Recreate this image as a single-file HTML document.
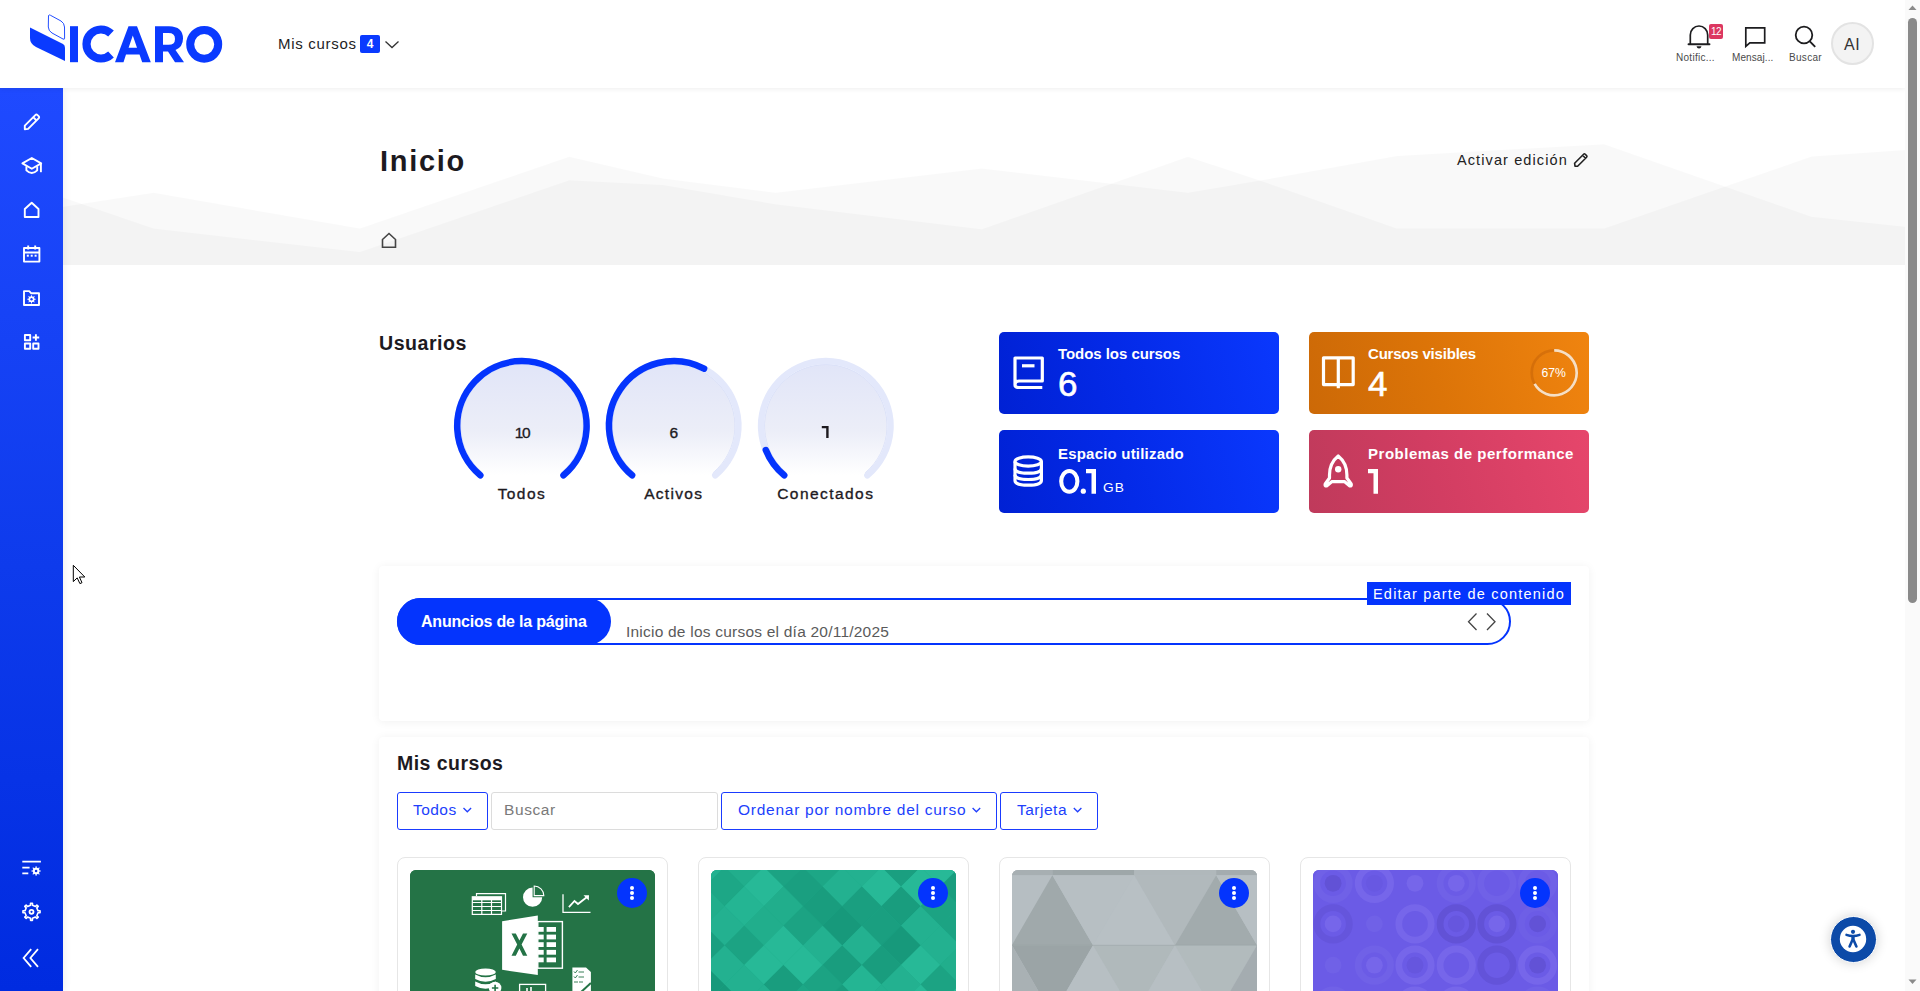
<!DOCTYPE html>
<html lang="es">
<head>
<meta charset="utf-8">
<title>Inicio</title>
<style>
*{box-sizing:border-box;margin:0;padding:0}
html,body{width:1920px;height:991px;overflow:hidden;background:#fff;font-family:"Liberation Sans",sans-serif;color:#1d1d1f}
.abs{position:absolute}
.t{position:absolute;white-space:nowrap;line-height:1}
#header{position:absolute;left:0;top:0;width:1905px;height:88px;background:#fff;box-shadow:0 1px 5px rgba(0,0,0,.07);z-index:5}
#sidebar{position:absolute;left:0;top:88px;width:63px;height:903px;background:linear-gradient(180deg,#1f4aff 0%,#0e3bec 53%,#002be0 100%);z-index:4;box-shadow:1px 0 8px rgba(0,0,0,.07)}
#sidebar svg{position:absolute;overflow:visible}
#scroll{position:absolute;left:1905px;top:0;width:15px;height:991px;background:#fafafa;z-index:10}
#pagehead{position:absolute;left:63px;top:88px;width:1842px;height:177px;background:#fff;overflow:hidden}

.btn{border:1.3px solid #1a3bff;border-radius:3px}
.card{width:271px;height:200px;border:1px solid #e6e6e6;border-radius:8px;background:#fff}
.cimg{width:245px;height:130px;border-radius:6px 6px 0 0;overflow:hidden}
.dots{width:30px;height:30px;border-radius:50%;background:#0434fd;z-index:2}
.dots i{position:absolute;left:13px;width:4.2px;height:4.2px;border-radius:50%;background:#fff}
.dots i:nth-child(1){top:7.9px}.dots i:nth-child(2){top:12.9px}.dots i:nth-child(3){top:17.9px}
#main{position:absolute;left:0;top:0;width:1905px;height:991px}
</style>
</head>
<body>

<div id="pagehead">
  <svg width="1842" height="177" viewBox="0 0 1842 177" style="position:absolute;left:0;top:0">
    <polygon fill="rgba(0,0,0,0.0235)" points="-2.0,118.8 0.0,118.8 90.6,104.7 296.9,140.6 506.2,68.8 600.0,90.6 712.5,104.7 918.8,80.6 1125.0,104.7 1200.0,92.0 1333.8,67.9 1541.1,56.2 1748.5,128.8 1842.0,138.8 1844.0,138.8 1844.0,180.0 -2.0,180.0"/>
    <polygon fill="rgba(0,0,0,0.0235)" points="-2.0,109.4 0.0,109.4 90.6,140.6 296.9,164.0 506.2,92.2 600.0,96.9 712.5,116.2 918.8,141.2 1125.0,68.8 1200.0,93.6 1333.8,140.5 1541.1,140.5 1748.5,68.6 1842.0,61.9 1844.0,61.9 1844.0,180.0 -2.0,180.0"/>
  </svg>
</div>


<div id="main">
  <div class="t" style="left:380px;top:147px;font-size:29px;font-weight:bold;color:#1d1a1f;letter-spacing:1.7px">Inicio</div>
  <div class="t" style="left:1457px;top:153px;font-size:14.5px;color:#222;letter-spacing:1.1px">Activar edición</div>
  <svg class="abs" style="left:1572px;top:152px" width="18" height="16" viewBox="0 0 18 16">
    <path d="M3 14.2 L2.6 11.2 L11.6 2.2 Q12.4 1.4 13.2 2.2 L14.6 3.6 Q15.4 4.4 14.6 5.2 L5.6 14.2 Z M10.6 3.3 L13.5 6.2" fill="none" stroke="#222" stroke-width="1.6" stroke-linejoin="round"/>
  </svg>
  <svg class="abs" style="left:378px;top:228px" width="22" height="22" viewBox="0 0 22 22">
    <path d="M4.5 19.3 L4.5 11.5 L11 5.5 L17.5 11.5 L17.5 19.3 Z" fill="none" stroke="#444" stroke-width="1.6" stroke-linejoin="miter"/>
  </svg>

  <!-- Usuarios -->
  <div class="t" style="left:379px;top:334.3px;font-size:19.6px;font-weight:bold;color:#1d1a1f;letter-spacing:0.5px">Usuarios</div>
  <svg class="abs" style="left:440px;top:340px" width="480" height="180" viewBox="0 0 480 180">
    <defs>
      <linearGradient id="gfill" x1="0" y1="0" x2="0" y2="1">
        <stop offset="0" stop-color="#e1e5f8"/>
        <stop offset="0.55" stop-color="#eceef8"/>
        <stop offset="0.9" stop-color="#ffffff"/>
      </linearGradient>
    </defs>
    <circle cx="81.90" cy="85.80" r="61.5" fill="url(#gfill)"/>
    <path d="M42.50 132.76 A61.3 61.3 0 1 1 121.30 132.76" fill="none" stroke="#d6ddf8" stroke-width="0.8"/>
    <path d="M40.31 135.36 A64.7 64.7 0 1 1 123.49 135.36" fill="none" stroke="#e3e8fb" stroke-width="6.5" stroke-linecap="round"/>
    <path d="M40.31 135.36 A64.7 64.7 0 1 1 123.49 135.36" fill="none" stroke="#0434fd" stroke-width="6.5" stroke-linecap="round"/>
    <circle cx="233.70" cy="85.80" r="61.5" fill="url(#gfill)"/>
    <path d="M194.30 132.76 A61.3 61.3 0 1 1 273.10 132.76" fill="none" stroke="#d6ddf8" stroke-width="0.8"/>
    <path d="M192.11 135.36 A64.7 64.7 0 1 1 275.29 135.36" fill="none" stroke="#e3e8fb" stroke-width="6.5" stroke-linecap="round"/>
    <path d="M192.11 135.36 A64.7 64.7 0 0 1 264.07 28.67" fill="none" stroke="#0434fd" stroke-width="6.5" stroke-linecap="round"/>
    <circle cx="385.80" cy="85.80" r="61.5" fill="url(#gfill)"/>
    <path d="M346.40 132.76 A61.3 61.3 0 1 1 425.20 132.76" fill="none" stroke="#d6ddf8" stroke-width="0.8"/>
    <path d="M344.21 135.36 A64.7 64.7 0 1 1 427.39 135.36" fill="none" stroke="#e3e8fb" stroke-width="6.5" stroke-linecap="round"/>
    <path d="M344.21 135.36 A64.7 64.7 0 0 1 325.81 110.04" fill="none" stroke="#0434fd" stroke-width="6.5" stroke-linecap="round"/>
  </svg>

  <div class="t" style="left:461.9px;width:120px;text-align:center;top:424.5px;font-size:15.5px;color:#1d1a1f;letter-spacing:-1.5px;-webkit-text-stroke:0.35px #1d1a1f">10</div>
  <div class="t" style="left:451.9px;width:140px;text-align:center;top:486.3px;font-size:15.5px;color:#1d1a1f;letter-spacing:1.4px;-webkit-text-stroke:0.35px #1d1a1f">Todos</div>
  <div class="t" style="left:613.7px;width:120px;text-align:center;top:424.5px;font-size:15.5px;color:#1d1a1f;-webkit-text-stroke:0.35px #1d1a1f">6</div>
  <div class="t" style="left:603.7px;width:140px;text-align:center;top:486.3px;font-size:15.5px;color:#1d1a1f;letter-spacing:1.3px;-webkit-text-stroke:0.35px #1d1a1f">Activos</div>
  
  <div class="t" style="left:755.8px;width:140px;text-align:center;top:486.3px;font-size:15.5px;color:#1d1a1f;letter-spacing:1.45px;-webkit-text-stroke:0.35px #1d1a1f">Conectados</div>
  <svg class="abs" style="left:815px;top:420px" width="20" height="22" viewBox="815 420 20 22">
    <path d="M821.8 426 L828.6 426 L828.6 438 L826.2 438 L826.2 428.2 L821.8 428.2 Z" fill="#1d1a1f"/>
  </svg>
  <!-- stat cards -->
  
  <div class="abs" style="left:999px;top:332px;width:280px;height:82px;border-radius:5px;background:linear-gradient(75deg,#0021d4 0%,#042ae8 45%,#0a38fd 100%)"></div>
  <div class="abs" style="left:999px;top:430px;width:280px;height:83px;border-radius:5px;background:linear-gradient(75deg,#0021d4 0%,#042ae8 45%,#0a38fd 100%)"></div>
  <div class="abs" style="left:1309px;top:332px;width:280px;height:82px;border-radius:5px;background:linear-gradient(75deg,#cc6907 0%,#dc7408 45%,#f0840f 100%)"></div>
  <div class="abs" style="left:1309px;top:430px;width:280px;height:83px;border-radius:5px;background:linear-gradient(75deg,#bf3a5b 0%,#d23d62 45%,#e6466b 100%)"></div>
  <svg class="abs" style="left:990px;top:320px" width="620" height="200" viewBox="990 320 620 200">
    <g fill="none" stroke="#fff" stroke-width="3.2" stroke-linejoin="round">
      <!-- book -->
      <path d="M1015 385 L1015 358 L1042.3 358 L1042.3 381 L1019 381 Q1015 381 1015 385 Q1015 387.5 1019 387.5 L1042.3 387.5"/>
      <path d="M1022 365.8 L1034.5 365.8"/>
      <!-- open book -->
      <path d="M1323.5 357.8 L1338.3 357.8 L1338.3 384.6 L1323.5 384.6 Z M1338.3 357.8 L1353.2 357.8 L1353.2 384.6 L1338.3 384.6 M1338.3 384.6 L1338.3 388.3"/>
      <!-- db -->
      <ellipse cx="1028.2" cy="461.5" rx="13.2" ry="4.6"/>
      <path d="M1015 461.5 L1015 480.5 Q1015 485.2 1028.2 485.2 Q1041.4 485.2 1041.4 480.5 L1041.4 461.5"/>
      <path d="M1015 468.5 Q1015 473.2 1028.2 473.2 Q1041.4 473.2 1041.4 468.5"/>
      <path d="M1015 474.8 Q1015 479.5 1028.2 479.5 Q1041.4 479.5 1041.4 474.8"/>
      <!-- rocket -->
      <path d="M1338.2 456 Q1329.5 463 1329.5 475 L1329.5 478 L1325.2 484 Q1324.5 486 1326.6 486 L1332 481.6 L1344.4 481.6 L1349.8 486 Q1351.9 486 1351.2 484 L1346.9 478 L1346.9 475 Q1346.9 463 1338.2 456 Z"/>
    </g>
    <circle cx="1338.2" cy="469.2" r="3.2" fill="#fff"/>
    <!-- 67% ring -->
    <circle cx="1554.2" cy="372.8" r="22.5" fill="none" stroke="rgba(140,55,0,0.2)" stroke-width="2.7"/>
    <path d="M1554.2 350.3 A22.5 22.5 0 1 1 1534.6 383.9" fill="none" stroke="#f6dfc4" stroke-width="2.7"/>
  </svg>
  <div class="t" style="left:1058px;top:346.2px;font-size:15px;font-weight:bold;color:#fff;letter-spacing:-0.05px">Todos los cursos</div>
  <div class="t" style="left:1058px;top:365.5px;font-size:35px;color:#fff;-webkit-text-stroke:0.6px #fff">6</div>
  <div class="t" style="left:1368px;top:346.2px;font-size:15px;font-weight:bold;color:#fff;letter-spacing:-0.2px">Cursos visibles</div>
  <div class="t" style="left:1368px;top:365.5px;font-size:35px;color:#fff;-webkit-text-stroke:0.6px #fff">4</div>
  <div class="t" style="left:1541.5px;top:366.6px;font-size:12.2px;color:#fff">67%</div>
  <div class="t" style="left:1058px;top:446px;font-size:15px;font-weight:bold;color:#fff;letter-spacing:0.2px">Espacio utilizado</div>
  
  <div class="t" style="left:1103px;top:481.4px;font-size:13.7px;color:#fff;letter-spacing:1.0px">GB</div>
  <div class="t" style="left:1368px;top:446px;font-size:15px;font-weight:bold;color:#fff;letter-spacing:0.52px">Problemas de performance</div>
  


  <svg class="abs" style="left:1050px;top:460px" width="60" height="40" viewBox="1050 460 60 40">
    <ellipse cx="1069.3" cy="481.35" rx="8.1" ry="10.35" fill="none" stroke="#fff" stroke-width="4.1"/>
    <circle cx="1083.3" cy="491.2" r="2.6" fill="#fff"/>
    <path d="M1086 468.9 L1096 468.9 L1096 493.8 L1091.5 493.8 L1091.5 473.2 L1086 473.2 Z" fill="#fff"/>
  </svg>
  <svg class="abs" style="left:1360px;top:460px" width="30" height="40" viewBox="1360 460 30 40">
    <path d="M1368 468.9 L1378 468.9 L1378 493.8 L1373.5 493.8 L1373.5 473.2 L1368 473.2 Z" fill="#fff"/>
  </svg>
  <!-- anuncios -->
  <div class="abs" style="left:379px;top:566px;width:1210px;height:155px;background:#fff;border-radius:4px;box-shadow:0 1px 10px rgba(0,0,0,.06)"></div>
  <div class="abs" style="left:397px;top:598px;width:1114px;height:47px;border:2px solid #0434fd;border-radius:24px;background:#fff"></div>
  <div class="abs" style="left:397px;top:598px;width:214px;height:47px;border-radius:24px;background:#0434fd"></div>
  <div class="t" style="left:421px;top:614px;font-size:16px;font-weight:bold;color:#fff;letter-spacing:-0.2px">Anuncios de la página</div>
  <div class="t" style="left:626px;top:624px;font-size:15.5px;color:#5a5a5a;letter-spacing:0.22px">Inicio de los cursos el día 20/11/2025</div>
  <svg class="abs" style="left:1462px;top:610px" width="40" height="24" viewBox="0 0 40 24">
    <path d="M14.5 3.5 L6.5 11.8 L14.5 20" fill="none" stroke="#444" stroke-width="1.3"/>
    <path d="M25 3.5 L33 11.8 L25 20" fill="none" stroke="#444" stroke-width="1.3"/>
  </svg>
  <div class="abs" style="left:1367px;top:582px;width:204px;height:23px;background:#0434fd"></div>
  <div class="t" style="left:1373px;top:586.8px;font-size:14.5px;color:#fff;letter-spacing:1.2px">Editar parte de contenido</div>

  <!-- Mis cursos -->
  <div class="abs" style="left:379px;top:737px;width:1210px;height:300px;background:#fff;border-radius:4px;box-shadow:0 1px 10px rgba(0,0,0,.06)"></div>
  <div class="t" style="left:397px;top:754px;font-size:19.5px;font-weight:bold;color:#1d1a1f;letter-spacing:0.45px">Mis cursos</div>
  <div class="abs btn" style="left:397px;top:792px;width:91px;height:38px"></div>
  <div class="t" style="left:413px;top:801.6px;font-size:15.5px;color:#213ffc;letter-spacing:0.45px">Todos</div>
  <div class="abs" style="left:491px;top:792px;width:227px;height:38px;border:1px solid #dcdcdc;border-radius:3px"></div>
  <div class="t" style="left:504px;top:801.6px;font-size:15.5px;color:#7a7a7a;letter-spacing:0.6px">Buscar</div>
  <div class="abs btn" style="left:721px;top:792px;width:276px;height:38px"></div>
  <div class="t" style="left:738px;top:801.6px;font-size:15.5px;color:#213ffc;letter-spacing:0.74px">Ordenar por nombre del curso</div>
  <div class="abs btn" style="left:1000px;top:792px;width:98px;height:38px"></div>
  <div class="t" style="left:1017px;top:801.6px;font-size:15.5px;color:#213ffc;letter-spacing:0.5px">Tarjeta</div>
  <svg class="abs" style="left:0;top:800px" width="1100" height="20" viewBox="0 800 1100 20">
    <g fill="none" stroke="#213ffc" stroke-width="1.3">
      <path d="M463.5 808 L467.3 811.8 L471.1 808"/>
      <path d="M972.6 808 L976.4 811.8 L980.2 808"/>
      <path d="M1073.8 808 L1077.6 811.8 L1081.4 808"/>
    </g>
  </svg>
  
  <div class="abs card" style="left:397px;top:857px"></div>
  <div class="abs card" style="left:698px;top:857px"></div>
  <div class="abs card" style="left:999px;top:857px"></div>
  <div class="abs card" style="left:1300px;top:857px"></div>
  <div class="abs cimg" style="left:410px;top:870px;background:#247346"><svg width="245" height="130" viewBox="0 0 245 130"><rect width="245" height="130" fill="#247346"/><g fill="#fff"><polygon points="92.1,51.2 127.8,45.4 127.8,105.1 92.1,99.8"/></g><path d="M101.5 63.5 L105.8 63.5 L109.4 70.5 L113.0 63.5 L117.3 63.5 L111.6 74.5 L117.3 85.8 L113.0 85.8 L109.4 78.5 L105.8 85.8 L101.5 85.8 L107.2 74.5 Z" fill="#247346"/><rect x="127.8" y="51.6" width="24.6" height="46.6" fill="none" stroke="#fff" stroke-width="1.4"/><rect x="127.8" y="57.0" width="5.9" height="4.8" fill="#fff"/><rect x="136.6" y="57.0" width="9.4" height="4.8" fill="#fff"/><rect x="127.8" y="64.6" width="5.9" height="4.8" fill="#fff"/><rect x="136.6" y="64.6" width="9.4" height="4.8" fill="#fff"/><rect x="127.8" y="72.2" width="5.9" height="4.8" fill="#fff"/><rect x="136.6" y="72.2" width="9.4" height="4.8" fill="#fff"/><rect x="127.8" y="79.9" width="5.9" height="4.8" fill="#fff"/><rect x="136.6" y="79.9" width="9.4" height="4.8" fill="#fff"/><rect x="127.8" y="87.5" width="5.9" height="4.8" fill="#fff"/><rect x="136.6" y="87.5" width="9.4" height="4.8" fill="#fff"/><g fill="none" stroke="#fff" stroke-width="1.2"><path d="M66.5 26.0 L66.5 23.6 L95.5 23.6 L95.5 41.0 L92.0 41.0"/><rect x="62.3" y="26.8" width="29.2" height="17.6" fill="none"/><path d="M62.3 32.5 L91.5 32.5 M62.3 36.5 L91.5 36.5 M62.3 40.5 L91.5 40.5 M71.8 29.0 L71.8 44.4 M81.5 29.0 L81.5 44.4"/></g><rect x="62.3" y="26.8" width="29.2" height="3.5" fill="#fff"/><path d="M122.6 27.2 L122.6 17.6 A9.6 9.6 0 1 0 132.2 27.2 Z" fill="#fff"/><path d="M124.2 25.6 L124.2 16.0 A9.6 9.6 0 0 1 133.8 25.6 Z" fill="none" stroke="#fff" stroke-width="1.1"/><g fill="none" stroke="#fff" stroke-width="1.3"><path d="M153.0 24.3 L153.0 42.3 L180.5 42.3"/><path d="M158.9 37.2 L164.5 31.0 L168.0 34.0 L177.0 27.0" stroke-width="1.8"/></g><path d="M173.5 25.2 L179.0 25.3 L178.8 30.5 Z" fill="#fff"/><g fill="#fff"><ellipse cx="75.5" cy="102.0" rx="10.3" ry="3.6"/><path d="M65.2 104.5 Q75.5 110.0 85.8 104.5 L85.8 109.0 Q75.5 114.5 65.2 109.0 Z"/><path d="M65.2 111.5 Q75.5 117.0 85.8 111.5 L85.8 116.0 Q75.5 121.5 65.2 116.0 Z"/><circle cx="85.1" cy="118.0" r="6.3"/></g><path d="M85.1 114.8 L85.1 121.2 M81.9 118.0 L88.3 118.0" stroke="#247346" stroke-width="1.6"/><rect x="109.6" y="114.4" width="26" height="12" fill="none" stroke="#fff" stroke-width="1.3"/><path d="M117.0 121.0 L117.0 118.0 M121.0 121.0 L121.0 117.0" stroke="#fff" stroke-width="1.6"/><path d="M162.4 97.5 L176.0 97.5 L180.9 102.0 L180.9 125.0 L162.4 125.0 Z" fill="#fff"/><g stroke="#247346" stroke-width="0.9" fill="none"><path d="M164.0 101.5 L165.3 103.0 L167.5 100.0 M168.5 102.0 L174.0 102.0"/><path d="M164.0 106.5 L165.3 108.0 L167.5 105.0 M168.5 107.0 L174.0 107.0"/><path d="M164.0 112.0 L168.0 112.0 M169.0 112.0 L173.0 112.0"/><path d="M170.0 123.0 L180.9 113.0" stroke-width="2"/></g></svg></div>
  <div class="abs cimg" style="left:711px;top:870px;background:#1fa886"><svg width="245" height="130" viewBox="0 0 245 130"><rect width="245" height="130" fill="#1faa88"/><polygon points="-25.6,-42.2 -6.0,-22.6 -25.6,-3.0 -45.2,-22.6" fill="#21ae8c"/><polygon points="13.6,-42.2 33.2,-22.6 13.6,-3.0 -6.0,-22.6" fill="#1a9f80"/><polygon points="52.8,-42.2 72.4,-22.6 52.8,-3.0 33.2,-22.6" fill="#21ae8c"/><polygon points="92.0,-42.2 111.6,-22.6 92.0,-3.0 72.4,-22.6" fill="#21ae8c"/><polygon points="131.2,-42.2 150.8,-22.6 131.2,-3.0 111.6,-22.6" fill="#1a9f80"/><polygon points="170.4,-42.2 190.0,-22.6 170.4,-3.0 150.8,-22.6" fill="#199d7e"/><polygon points="209.6,-42.2 229.2,-22.6 209.6,-3.0 190.0,-22.6" fill="#1da786"/><polygon points="248.8,-42.2 268.4,-22.6 248.8,-3.0 229.2,-22.6" fill="#1a9f80"/><polygon points="288.0,-42.2 307.6,-22.6 288.0,-3.0 268.4,-22.6" fill="#21ae8c"/><polygon points="-45.2,-22.6 -25.6,-3.0 -45.2,16.6 -64.8,-3.0" fill="#1da786"/><polygon points="-6.0,-22.6 13.6,-3.0 -6.0,16.6 -25.6,-3.0" fill="#23b190"/><polygon points="33.2,-22.6 52.8,-3.0 33.2,16.6 13.6,-3.0" fill="#21ae8c"/><polygon points="72.4,-22.6 92.0,-3.0 72.4,16.6 52.8,-3.0" fill="#1ca383"/><polygon points="111.6,-22.6 131.2,-3.0 111.6,16.6 92.0,-3.0" fill="#1da786"/><polygon points="150.8,-22.6 170.4,-3.0 150.8,16.6 131.2,-3.0" fill="#23b190"/><polygon points="190.0,-22.6 209.6,-3.0 190.0,16.6 170.4,-3.0" fill="#1a9f80"/><polygon points="229.2,-22.6 248.8,-3.0 229.2,16.6 209.6,-3.0" fill="#27b997"/><polygon points="268.4,-22.6 288.0,-3.0 268.4,16.6 248.8,-3.0" fill="#17997b"/><polygon points="-25.6,-3.0 -6.0,16.6 -25.6,36.2 -45.2,16.6" fill="#21ae8c"/><polygon points="13.6,-3.0 33.2,16.6 13.6,36.2 -6.0,16.6" fill="#1da786"/><polygon points="52.8,-3.0 72.4,16.6 52.8,36.2 33.2,16.6" fill="#27b997"/><polygon points="92.0,-3.0 111.6,16.6 92.0,36.2 72.4,16.6" fill="#1a9f80"/><polygon points="131.2,-3.0 150.8,16.6 131.2,36.2 111.6,16.6" fill="#23b190"/><polygon points="170.4,-3.0 190.0,16.6 170.4,36.2 150.8,16.6" fill="#27b997"/><polygon points="209.6,-3.0 229.2,16.6 209.6,36.2 190.0,16.6" fill="#27b997"/><polygon points="248.8,-3.0 268.4,16.6 248.8,36.2 229.2,16.6" fill="#199d7e"/><polygon points="288.0,-3.0 307.6,16.6 288.0,36.2 268.4,16.6" fill="#199d7e"/><polygon points="-45.2,16.6 -25.6,36.2 -45.2,55.8 -64.8,36.2" fill="#27b997"/><polygon points="-6.0,16.6 13.6,36.2 -6.0,55.8 -25.6,36.2" fill="#21ae8c"/><polygon points="33.2,16.6 52.8,36.2 33.2,55.8 13.6,36.2" fill="#24b593"/><polygon points="72.4,16.6 92.0,36.2 72.4,55.8 52.8,36.2" fill="#21ae8c"/><polygon points="111.6,16.6 131.2,36.2 111.6,55.8 92.0,36.2" fill="#199d7e"/><polygon points="150.8,16.6 170.4,36.2 150.8,55.8 131.2,36.2" fill="#1a9f80"/><polygon points="190.0,16.6 209.6,36.2 190.0,55.8 170.4,36.2" fill="#199d7e"/><polygon points="229.2,16.6 248.8,36.2 229.2,55.8 209.6,36.2" fill="#1ca383"/><polygon points="268.4,16.6 288.0,36.2 268.4,55.8 248.8,36.2" fill="#21ae8c"/><polygon points="-25.6,36.2 -6.0,55.8 -25.6,75.4 -45.2,55.8" fill="#27b997"/><polygon points="13.6,36.2 33.2,55.8 13.6,75.4 -6.0,55.8" fill="#23b190"/><polygon points="52.8,36.2 72.4,55.8 52.8,75.4 33.2,55.8" fill="#21ae8c"/><polygon points="92.0,36.2 111.6,55.8 92.0,75.4 72.4,55.8" fill="#1ca383"/><polygon points="131.2,36.2 150.8,55.8 131.2,75.4 111.6,55.8" fill="#17997b"/><polygon points="170.4,36.2 190.0,55.8 170.4,75.4 150.8,55.8" fill="#1a9f80"/><polygon points="209.6,36.2 229.2,55.8 209.6,75.4 190.0,55.8" fill="#23b190"/><polygon points="248.8,36.2 268.4,55.8 248.8,75.4 229.2,55.8" fill="#1ca383"/><polygon points="288.0,36.2 307.6,55.8 288.0,75.4 268.4,55.8" fill="#24b593"/><polygon points="-45.2,55.8 -25.6,75.4 -45.2,95.0 -64.8,75.4" fill="#199d7e"/><polygon points="-6.0,55.8 13.6,75.4 -6.0,95.0 -25.6,75.4" fill="#1a9f80"/><polygon points="33.2,55.8 52.8,75.4 33.2,95.0 13.6,75.4" fill="#1ca383"/><polygon points="72.4,55.8 92.0,75.4 72.4,95.0 52.8,75.4" fill="#27b997"/><polygon points="111.6,55.8 131.2,75.4 111.6,95.0 92.0,75.4" fill="#23b190"/><polygon points="150.8,55.8 170.4,75.4 150.8,95.0 131.2,75.4" fill="#23b190"/><polygon points="190.0,55.8 209.6,75.4 190.0,95.0 170.4,75.4" fill="#17997b"/><polygon points="229.2,55.8 248.8,75.4 229.2,95.0 209.6,75.4" fill="#23b190"/><polygon points="268.4,55.8 288.0,75.4 268.4,95.0 248.8,75.4" fill="#1ca383"/><polygon points="-25.6,75.4 -6.0,95.0 -25.6,114.6 -45.2,95.0" fill="#17997b"/><polygon points="13.6,75.4 33.2,95.0 13.6,114.6 -6.0,95.0" fill="#23b190"/><polygon points="52.8,75.4 72.4,95.0 52.8,114.6 33.2,95.0" fill="#27b997"/><polygon points="92.0,75.4 111.6,95.0 92.0,114.6 72.4,95.0" fill="#27b997"/><polygon points="131.2,75.4 150.8,95.0 131.2,114.6 111.6,95.0" fill="#199d7e"/><polygon points="170.4,75.4 190.0,95.0 170.4,114.6 150.8,95.0" fill="#199d7e"/><polygon points="209.6,75.4 229.2,95.0 209.6,114.6 190.0,95.0" fill="#27b997"/><polygon points="248.8,75.4 268.4,95.0 248.8,114.6 229.2,95.0" fill="#21ae8c"/><polygon points="288.0,75.4 307.6,95.0 288.0,114.6 268.4,95.0" fill="#17997b"/><polygon points="-45.2,95.0 -25.6,114.6 -45.2,134.2 -64.8,114.6" fill="#17997b"/><polygon points="-6.0,95.0 13.6,114.6 -6.0,134.2 -25.6,114.6" fill="#17997b"/><polygon points="33.2,95.0 52.8,114.6 33.2,134.2 13.6,114.6" fill="#23b190"/><polygon points="72.4,95.0 92.0,114.6 72.4,134.2 52.8,114.6" fill="#199d7e"/><polygon points="111.6,95.0 131.2,114.6 111.6,134.2 92.0,114.6" fill="#1ca383"/><polygon points="150.8,95.0 170.4,114.6 150.8,134.2 131.2,114.6" fill="#24b593"/><polygon points="190.0,95.0 209.6,114.6 190.0,134.2 170.4,114.6" fill="#23b190"/><polygon points="229.2,95.0 248.8,114.6 229.2,134.2 209.6,114.6" fill="#1ca383"/><polygon points="268.4,95.0 288.0,114.6 268.4,134.2 248.8,114.6" fill="#24b593"/><polygon points="-25.6,114.6 -6.0,134.2 -25.6,153.8 -45.2,134.2" fill="#27b997"/><polygon points="13.6,114.6 33.2,134.2 13.6,153.8 -6.0,134.2" fill="#17997b"/><polygon points="52.8,114.6 72.4,134.2 52.8,153.8 33.2,134.2" fill="#23b190"/><polygon points="92.0,114.6 111.6,134.2 92.0,153.8 72.4,134.2" fill="#1da786"/><polygon points="131.2,114.6 150.8,134.2 131.2,153.8 111.6,134.2" fill="#199d7e"/><polygon points="170.4,114.6 190.0,134.2 170.4,153.8 150.8,134.2" fill="#23b190"/><polygon points="209.6,114.6 229.2,134.2 209.6,153.8 190.0,134.2" fill="#27b997"/><polygon points="248.8,114.6 268.4,134.2 248.8,153.8 229.2,134.2" fill="#27b997"/><polygon points="288.0,114.6 307.6,134.2 288.0,153.8 268.4,134.2" fill="#21ae8c"/><polygon points="-45.2,134.2 -25.6,153.8 -45.2,173.4 -64.8,153.8" fill="#21ae8c"/><polygon points="-6.0,134.2 13.6,153.8 -6.0,173.4 -25.6,153.8" fill="#1da786"/><polygon points="33.2,134.2 52.8,153.8 33.2,173.4 13.6,153.8" fill="#1a9f80"/><polygon points="72.4,134.2 92.0,153.8 72.4,173.4 52.8,153.8" fill="#199d7e"/><polygon points="111.6,134.2 131.2,153.8 111.6,173.4 92.0,153.8" fill="#21ae8c"/><polygon points="150.8,134.2 170.4,153.8 150.8,173.4 131.2,153.8" fill="#1a9f80"/><polygon points="190.0,134.2 209.6,153.8 190.0,173.4 170.4,153.8" fill="#199d7e"/><polygon points="229.2,134.2 248.8,153.8 229.2,173.4 209.6,153.8" fill="#1da786"/><polygon points="268.4,134.2 288.0,153.8 268.4,173.4 248.8,153.8" fill="#17997b"/></svg></div>
  <div class="abs cimg" style="left:1012px;top:870px;background:#b3b9bc"><svg width="245" height="130" viewBox="0 0 245 130"><rect width="245" height="130" fill="#b5bdc1"/><polygon points="-12.0,-2.0 40.4,-2.0 40.4,5.2 -12.0,5.2" fill="#a7afb2"/><polygon points="40.4,-2.0 122.3,-2.0 122.3,5.2 40.4,5.2" fill="#9ea7a9"/><polygon points="122.3,-2.0 204.2,-2.0 204.2,5.2 122.3,5.2" fill="#b0b8bb"/><polygon points="204.2,-2.0 258.0,-2.0 258.0,5.2 204.2,5.2" fill="#a4acaf"/><polygon points="-12.0,5.2 40.4,5.2 0.4,75.3 -12.0,75.3" fill="#b6bec2"/><polygon points="40.4,5.2 81.0,75.3 -0.2,75.3" fill="#a0a9ab"/><polygon points="40.4,5.2 122.3,5.2 81.0,75.3" fill="#b7bfc3"/><polygon points="122.3,5.2 163.0,75.3 81.0,75.3" fill="#b8c0c4"/><polygon points="122.3,5.2 204.2,5.2 163.0,75.3" fill="#b1b9bc"/><polygon points="204.2,5.2 245.0,75.3 163.0,75.3" fill="#a2abad"/><polygon points="204.2,5.2 258.0,5.2 258.0,75.3 245.0,75.3" fill="#b7bfc3"/><polygon points="-12.0,75.3 0.0,75.3 -12.0,99.3" fill="#a9b1b4"/><polygon points="0.0,75.3 81.0,75.3 40.4,145.4" fill="#9ba4a6"/><polygon points="-12.0,99.3 0.0,75.3 40.4,145.4 -12.0,145.4" fill="#a9b1b4"/><polygon points="81.0,75.3 122.3,145.4 40.4,145.4" fill="#b7bfc3"/><polygon points="81.0,75.3 163.0,75.3 122.3,145.4" fill="#b0b9bb"/><polygon points="163.0,75.3 204.2,145.4 122.3,145.4" fill="#b7bfc3"/><polygon points="163.0,75.3 245.0,75.3 204.2,145.4" fill="#b2bbbd"/><polygon points="245.0,75.3 258.0,75.3 258.0,145.4 204.2,145.4" fill="#a4acb0"/><path d="M0 75.3 L245 75.3" stroke="#9aa3a6" stroke-width="0.8" opacity="0.6"/></svg></div>
  <div class="abs cimg" style="left:1313px;top:870px;background:#6b5ce5"><svg width="245" height="130" viewBox="0 0 245 130"><rect width="245" height="130" fill="#6b5be6"/><circle cx="20.1" cy="13.3" r="16.2" fill="none" stroke="#7061e7" stroke-width="6.8"/><circle cx="20.1" cy="13.3" r="8.4" fill="#6252d6"/><circle cx="61.4" cy="13.3" r="16.2" fill="none" stroke="#7666ea" stroke-width="6.8"/><circle cx="61.4" cy="13.3" r="8.4" fill="#6858e2"/><circle cx="102.0" cy="13.3" r="8.4" fill="#7666ea"/><circle cx="143.3" cy="13.3" r="16.2" fill="none" stroke="#7061e7" stroke-width="6.8"/><circle cx="143.3" cy="13.3" r="8.4" fill="#7666ea"/><circle cx="183.9" cy="13.3" r="16.2" fill="none" stroke="#7061e7" stroke-width="6.8"/><circle cx="224.6" cy="13.3" r="16.2" fill="none" stroke="#7061e7" stroke-width="6.8"/><circle cx="20.1" cy="53.9" r="16.2" fill="none" stroke="#6555dc" stroke-width="6.8"/><circle cx="20.1" cy="53.9" r="8.4" fill="#7666ea"/><circle cx="61.4" cy="53.9" r="8.4" fill="#7061e7"/><circle cx="102.0" cy="53.9" r="16.2" fill="none" stroke="#7666ea" stroke-width="6.8"/><circle cx="143.3" cy="53.9" r="16.2" fill="none" stroke="#6252d6" stroke-width="6.8"/><circle cx="143.3" cy="53.9" r="8.4" fill="#6656de"/><circle cx="183.9" cy="53.9" r="16.2" fill="none" stroke="#6252d6" stroke-width="6.8"/><circle cx="183.9" cy="53.9" r="8.4" fill="#7666ea"/><circle cx="224.6" cy="53.9" r="16.2" fill="none" stroke="#6e5fe6" stroke-width="6.8"/><circle cx="224.6" cy="53.9" r="8.4" fill="#6252d6"/><circle cx="20.1" cy="95.2" r="8.4" fill="#7061e7"/><circle cx="61.4" cy="95.2" r="16.2" fill="none" stroke="#7061e7" stroke-width="6.8"/><circle cx="61.4" cy="95.2" r="8.4" fill="#7666ea"/><circle cx="102.0" cy="95.2" r="16.2" fill="none" stroke="#7666ea" stroke-width="6.8"/><circle cx="102.0" cy="95.2" r="8.4" fill="#6656de"/><circle cx="143.3" cy="95.2" r="16.2" fill="none" stroke="#7666ea" stroke-width="6.8"/><circle cx="183.9" cy="95.2" r="16.2" fill="none" stroke="#6353d9" stroke-width="6.8"/><circle cx="224.6" cy="95.2" r="16.2" fill="none" stroke="#7666ea" stroke-width="6.8"/><circle cx="224.6" cy="95.2" r="8.4" fill="#6252d6"/><circle cx="20.1" cy="136.0" r="16.2" fill="none" stroke="#7061e7" stroke-width="6.8"/><circle cx="102.0" cy="136.0" r="16.2" fill="none" stroke="#7666ea" stroke-width="6.8"/><circle cx="143.3" cy="136.0" r="16.2" fill="none" stroke="#7666ea" stroke-width="6.8"/><circle cx="224.6" cy="136.0" r="16.2" fill="none" stroke="#7061e7" stroke-width="6.8"/></svg></div>
  <div class="abs dots" style="left:617px;top:878px"><i></i><i></i><i></i></div>
  <div class="abs dots" style="left:918px;top:878px"><i></i><i></i><i></i></div>
  <div class="abs dots" style="left:1219px;top:878px"><i></i><i></i><i></i></div>
  <div class="abs dots" style="left:1520px;top:878px"><i></i><i></i><i></i></div>

</div>

<div id="header">
  <!-- logo -->
  <svg class="abs" style="left:0;top:0" width="240" height="80" viewBox="0 0 240 80">
    <path d="M30 27.5 L63 44 Q65 45 65 48 L65 61 L36 47 Q30 44 30 38 Z" fill="#0a3aff"/>
    <path d="M48.5 15.5 Q49 14.5 50.5 15.3 L61 21 Q64.3 23 64.5 27 L64.6 38.2 Q64.6 39.8 63 39 L52 33 Q48.5 31 48.3 27 Z" fill="none" stroke="#0a3aff" stroke-width="0.9"/>
    <rect x="70" y="26.2" width="8" height="36" fill="#0a3aff"/>
    <path d="M111 33.5 A14.5 14.5 0 1 0 111 54.5" fill="none" stroke="#0a3aff" stroke-width="8.2"/>
    <path d="M115 62.3 L128.5 26.2 L137 26.2 L150.8 62.3 L142.2 62.3 L139.5 54.5 L126 54.5 L123.5 62.3 Z M128.6 47.8 L137 47.8 L132.8 35.5 Z" fill="#0a3aff" fill-rule="evenodd"/>
    <path d="M155 62.3 L155 26.2 L169 26.2 Q183 26.5 183 38.5 Q183 47 175.5 50 L184 62.3 L175 62.3 L168 51.5 L163 51.5 L163 62.3 Z M163 33 L163 44.8 L168.5 44.8 Q175 44.8 175 38.9 Q175 33 168.5 33 Z" fill="#0a3aff" fill-rule="evenodd"/>
    <ellipse cx="204.2" cy="44.3" rx="14" ry="14.4" fill="none" stroke="#0a3aff" stroke-width="8"/>
  </svg>
  <div class="t" style="left:278px;top:35.6px;font-size:15px;color:#1d1d1f;letter-spacing:0.7px">Mis cursos</div>
  <div class="abs" style="left:360px;top:35px;width:20px;height:18px;background:#0a3aff;border-radius:2px;color:#fff;font-weight:bold;font-size:12px;line-height:18px;text-align:center">4</div>
  <svg class="abs" style="left:384px;top:39px" width="16" height="12" viewBox="0 0 16 12"><path d="M1.5 2.5 L8 8.5 L14.5 2.5" fill="none" stroke="#333" stroke-width="1.3"/></svg>

  <!-- right icons -->
  <svg class="abs" style="left:1680px;top:20px" width="40" height="32" viewBox="0 0 40 32">
    <path d="M10.3 24 L10.3 15 A8.7 9 0 0 1 27.7 15 L27.7 24" fill="none" stroke="#1d1d1f" stroke-width="1.7"/>
    <path d="M8.5 24.2 L29.5 24.2" stroke="#1d1d1f" stroke-width="1.9" stroke-linecap="round"/>
    <path d="M16.5 26.3 L21.5 26.3 Q21 28.5 19 28.5 Q17 28.5 16.5 26.3Z" fill="#1d1d1f"/>
  </svg>
  <div class="abs" style="left:1709px;top:24px;width:14px;height:15px;background:#dc3761;border-radius:2px;color:#fff;font-size:10px;line-height:15px;text-align:center;letter-spacing:-0.5px">12</div>
  <div class="t" style="left:1676px;top:53px;font-size:10px;color:#4a4a4a;letter-spacing:0.28px">Notific...</div>
  <svg class="abs" style="left:1740px;top:22px" width="32" height="30" viewBox="0 0 32 30">
    <path d="M5.8 24.3 L5.8 5.9 L24.7 5.9 L24.7 20.8 L9.8 20.8 Z" fill="none" stroke="#1d1d1f" stroke-width="1.7" stroke-linejoin="miter"/>
  </svg>
  <div class="t" style="left:1732px;top:53px;font-size:10px;color:#4a4a4a;letter-spacing:0.1px">Mensaj...</div>
  <svg class="abs" style="left:1790px;top:22px" width="32" height="30" viewBox="0 0 32 30">
    <circle cx="14" cy="13" r="8.3" fill="none" stroke="#1d1d1f" stroke-width="1.8"/>
    <path d="M19.8 19.3 L25.2 24.8" stroke="#1d1d1f" stroke-width="1.9"/>
  </svg>
  <div class="t" style="left:1789px;top:53px;font-size:10px;color:#4a4a4a;letter-spacing:0.3px">Buscar</div>
  <div class="abs" style="left:1831px;top:22px;width:43px;height:43px;border-radius:50%;background:#f3f3f3;border:2.5px solid #e3e3e3"></div>
  <div class="t" style="left:1844px;top:37px;font-size:16px;color:#333;letter-spacing:0.7px">AI</div>
</div>

<div id="sidebar">
  <svg style="left:0;top:0" width="63" height="400" viewBox="0 0 63 400">
    <g fill="none" stroke="#fff" stroke-width="1.9" stroke-linejoin="round">
      <path d="M24.8 41.2 L24.8 37.6 L35.3 27.1 Q36.4 26 37.5 27.1 L38.6 28.2 Q39.7 29.3 38.6 30.4 L28.1 40.9 Z"/>
      <path d="M33.2 29.2 L36.5 32.5"/>
      <path d="M22.4 75.4 L31.8 70 L41.2 75.4 L31.8 80.8 Z"/>
      <path d="M26.4 78.2 L26.4 82.4 Q31.8 87.6 37.2 82.4 L37.2 78.2"/>
      <path d="M40.9 75.8 L40.9 84.2"/>
      <path d="M24.8 129 L24.8 121 L31.7 114.7 L38.5 121 L38.5 129 Z"/>
      <rect x="24" y="160" width="15.4" height="13.6"/>
      <path d="M24 164.5 L39.4 164.5 M28.2 157.4 L28.2 161.5 M35.2 157.4 L35.2 161.5"/>
      <path d="M24 217 L24 203.1 L29.2 203.1 L31.3 205.3 L39 205.3 L39 217 Z"/>
      <rect x="24.9" y="247" width="5.3" height="5.3"/>
      <rect x="24.9" y="255.5" width="5.3" height="5.3"/>
      <rect x="33.2" y="255.5" width="5.3" height="5.3"/>
      <path d="M35.9 246.2 L35.9 252.8 M32.6 249.5 L39.2 249.5"/>
    </g>
    <g fill="#fff">
      <rect x="26.8" y="166.7" width="2" height="2"/><rect x="30.7" y="166.7" width="2" height="2"/><rect x="34.6" y="166.7" width="2" height="2"/>
      <path d="M31.04 208.23 L31.03 207.13 L31.97 207.13 L31.96 208.23 L33.34 208.81 L34.12 208.02 L34.78 208.68 L33.99 209.46 L34.57 210.84 L35.67 210.83 L35.67 211.77 L34.57 211.76 L33.99 213.14 L34.78 213.92 L34.12 214.58 L33.34 213.79 L31.96 214.37 L31.97 215.47 L31.03 215.47 L31.04 214.37 L29.66 213.79 L28.88 214.58 L28.22 213.92 L29.01 213.14 L28.43 211.76 L27.33 211.77 L27.33 210.83 L28.43 210.84 L29.01 209.46 L28.22 208.68 L28.88 208.02 L29.66 208.81 Z"/>
    </g>
    <circle cx="31.5" cy="211.3" r="1.2" fill="#1b3df8"/>
  </svg>
  <svg style="left:0;top:760px" width="63" height="140" viewBox="0 0 63 140">
    <g fill="none" stroke="#fff" stroke-width="1.8">
      <path d="M22.3 13.6 L40.9 13.6 M22.3 19.7 L29.6 19.7 M22.3 25.3 L28.3 25.3"/>
      <path d="M30.52 57.27 L30.54 55.25 L32.46 55.25 L32.48 57.27 L35.42 58.49 L36.86 57.08 L38.22 58.44 L36.81 59.88 L38.03 62.82 L40.05 62.84 L40.05 64.76 L38.03 64.78 L36.81 67.72 L38.22 69.16 L36.86 70.52 L35.42 69.11 L32.48 70.33 L32.46 72.35 L30.54 72.35 L30.52 70.33 L27.58 69.11 L26.14 70.52 L24.78 69.16 L26.19 67.72 L24.97 64.78 L22.95 64.76 L22.95 62.84 L24.97 62.82 L26.19 59.88 L24.78 58.44 L26.14 57.08 L27.58 58.49 Z" stroke-width="1.6" stroke-linejoin="round"/>
      <circle cx="31.5" cy="63.8" r="2"/>
      <path d="M31.2 101.2 L23.6 110 L31.2 118.8 M38 101.2 L30.4 110 L38 118.8" stroke-width="1.8"/>
    </g>
    <path d="M35.58 19.54 L35.58 18.33 L36.62 18.33 L36.62 19.54 L38.18 20.18 L39.03 19.33 L39.77 20.07 L38.92 20.92 L39.56 22.48 L40.77 22.48 L40.77 23.52 L39.56 23.52 L38.92 25.08 L39.77 25.93 L39.03 26.67 L38.18 25.82 L36.62 26.46 L36.62 27.67 L35.58 27.67 L35.58 26.46 L34.02 25.82 L33.17 26.67 L32.43 25.93 L33.28 25.08 L32.64 23.52 L31.43 23.52 L31.43 22.48 L32.64 22.48 L33.28 20.92 L32.43 20.07 L33.17 19.33 L34.02 20.18 Z" fill="#fff"/>
    <circle cx="36.1" cy="23" r="1.3" fill="#0a2fe4"/>
  </svg>
</div>


<div class="abs" style="left:1829.5px;top:915.5px;width:47px;height:47px;border-radius:50%;background:#0c4aa8;border:1.5px solid #fff;box-shadow:0 0 12px rgba(0,0,0,.18);z-index:20"></div>
<svg class="abs" style="left:1833px;top:919px;z-index:21" width="40" height="40" viewBox="1833 919 40 40">
  <circle cx="1853" cy="939" r="13.2" fill="#fff"/>
  <circle cx="1853" cy="931.8" r="2.1" fill="#0c4aa8"/>
  <path d="M1846.4 934.8 Q1853 937.2 1859.6 934.8" fill="none" stroke="#0c4aa8" stroke-width="2.3" stroke-linecap="round"/>
  <path d="M1853 936.5 L1853 941.5" stroke="#0c4aa8" stroke-width="3.4"/><path d="M1852.2 940.5 L1849.6 946.5 M1853.8 940.5 L1856.4 946.5" fill="none" stroke="#0c4aa8" stroke-width="2.6" stroke-linecap="round"/>
</svg>
<svg class="abs" style="left:72px;top:564px;z-index:30" width="16" height="22" viewBox="-1 -1 16 22">
  <path d="M0.3 0.3 L0.3 16.6 L4.2 12.9 L6.9 18.6 L9 17.7 L6.4 12 L11.8 12 Z" fill="#fff" stroke="#000" stroke-width="1" stroke-linejoin="miter"/>
</svg>

<div id="scroll">
  <svg class="abs" style="left:0;top:0" width="15" height="991" viewBox="0 0 15 991">
    <path d="M3.5 10 L7.5 5.5 L11.5 10 Z" fill="#8a8a8a"/>
    <path d="M3.5 979.5 L7.5 984 L11.5 979.5 Z" fill="#8a8a8a"/>
  </svg>
  <div class="abs" style="left:3px;top:18px;width:9px;height:585px;border-radius:5px;background:#8a8a8a"></div>
</div>

</body>
</html>
